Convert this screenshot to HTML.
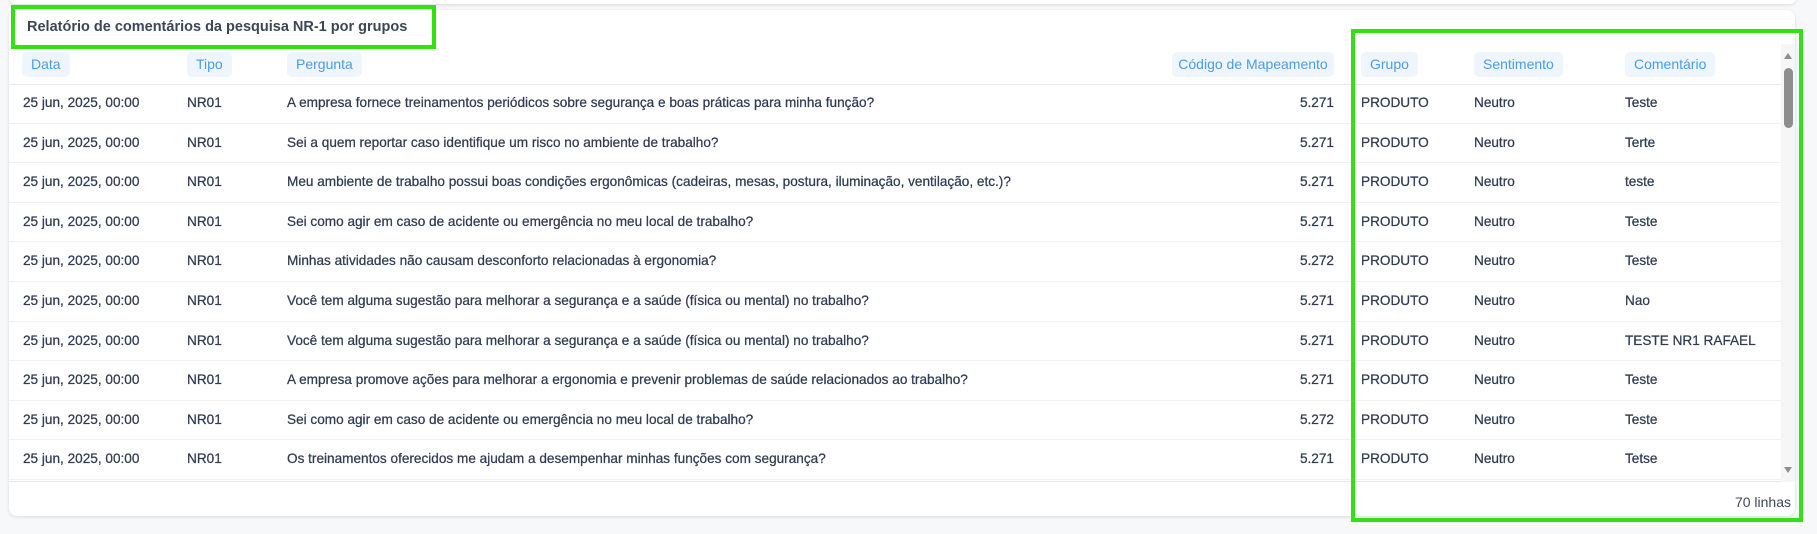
<!DOCTYPE html>
<html><head><meta charset="utf-8"><style>
*{box-sizing:border-box;margin:0;padding:0}
body{width:1817px;height:534px;background:#f7f8fa;font-family:"Liberation Sans",sans-serif;color:#2f3b52;position:relative;overflow:hidden}
.top{position:absolute;left:9px;right:21px;top:-10px;height:14px;background:#fff;border-radius:6px;box-shadow:0 1px 3px rgba(0,0,0,.12)}
.card{position:absolute;left:9px;top:10px;width:1786px;height:506px;background:#fff;border-radius:8px;box-shadow:0 1px 3px rgba(0,0,0,.12)}
.title{position:absolute;left:27px;top:19px;font-size:14.5px;font-weight:bold;color:#3d4657}
.g1{position:absolute;left:11px;top:5px;width:425px;height:44px;border:4px solid #33e012}
.g2{position:absolute;left:1351px;top:29px;width:452px;height:493px;border:4px solid #33e012}
.pill{position:absolute;top:52px;height:25px;line-height:25px;background:#eef5fd;color:#4a9de5;font-size:14px;border-radius:5px;padding:0 9px;white-space:nowrap}
.hline{position:absolute;left:9px;width:1772px;height:1px;background:#e6e8ec}
.row{position:absolute;left:9px;width:1772px;height:39.5px;border-bottom:1px solid #f0f1f3;font-size:13.6px;-webkit-text-stroke:0.25px #2f3b52}
.row span{position:absolute;top:11px;white-space:nowrap}
.track{position:absolute;left:1781px;top:44px;width:14px;height:438px;background:#f6f6f6}
.thumb{position:absolute;left:1784px;top:68px;width:9px;height:60px;border-radius:5px;background:#8e8e8e}
.foot{position:absolute;right:26px;top:494px;font-size:14px;color:#3d4657}
</style></head><body>
<div class="top"></div>
<div class="card"></div>
<div class="title">Relatório de comentários da pesquisa NR-1 por grupos</div>
<div class="pill" style="left:22px">Data</div>
<div class="pill" style="left:187px">Tipo</div>
<div class="pill" style="left:287px">Pergunta</div>
<div class="pill" style="left:1172px;width:162px;text-align:center;padding:0">Código de Mapeamento</div>
<div class="pill" style="left:1361px">Grupo</div>
<div class="pill" style="left:1474px">Sentimento</div>
<div class="pill" style="left:1625px">Comentário</div>
<div class="hline" style="top:84px"></div>
<div id="rows"></div>
<div class="hline" style="top:481px"></div>
<div class="track"></div>
<svg style="position:absolute;left:1783px;top:52px" width="10" height="8"><path d="M1 7L5 1L9 7Z" fill="#8e8e8e"/></svg>
<svg style="position:absolute;left:1783px;top:466px" width="10" height="8"><path d="M1 1L5 7L9 1Z" fill="#8e8e8e"/></svg>
<div class="thumb"></div>
<div class="foot">70 linhas</div>
<div class="g1"></div>
<div class="g2"></div>
<script>
var d=[["A empresa fornece treinamentos periódicos sobre segurança e boas práticas para minha função?","5.271","Teste"],
["Sei a quem reportar caso identifique um risco no ambiente de trabalho?","5.271","Terte"],
["Meu ambiente de trabalho possui boas condições ergonômicas (cadeiras, mesas, postura, iluminação, ventilação, etc.)?","5.271","teste"],
["Sei como agir em caso de acidente ou emergência no meu local de trabalho?","5.271","Teste"],
["Minhas atividades não causam desconforto relacionadas à ergonomia?","5.272","Teste"],
["Você tem alguma sugestão para melhorar a segurança e a saúde (física ou mental) no trabalho?","5.271","Nao"],
["Você tem alguma sugestão para melhorar a segurança e a saúde (física ou mental) no trabalho?","5.271","TESTE NR1 RAFAEL"],
["A empresa promove ações para melhorar a ergonomia e prevenir problemas de saúde relacionados ao trabalho?","5.271","Teste"],
["Sei como agir em caso de acidente ou emergência no meu local de trabalho?","5.272","Teste"],
["Os treinamentos oferecidos me ajudam a desempenhar minhas funções com segurança?","5.271","Tetse"]];
var h="";
d.forEach(function(r,i){h+='<div class="row" style="top:'+(84+i*39.6)+'px"><span style="left:14px">25 jun, 2025, 00:00</span><span style="left:178px">NR01</span><span style="left:278px">'+r[0]+'</span><span style="right:447px">'+r[1]+'</span><span style="left:1352px">PRODUTO</span><span style="left:1465px">Neutro</span><span style="left:1616px">'+r[2]+'</span></div>';});
document.getElementById("rows").innerHTML=h;
</script>
</body></html>
